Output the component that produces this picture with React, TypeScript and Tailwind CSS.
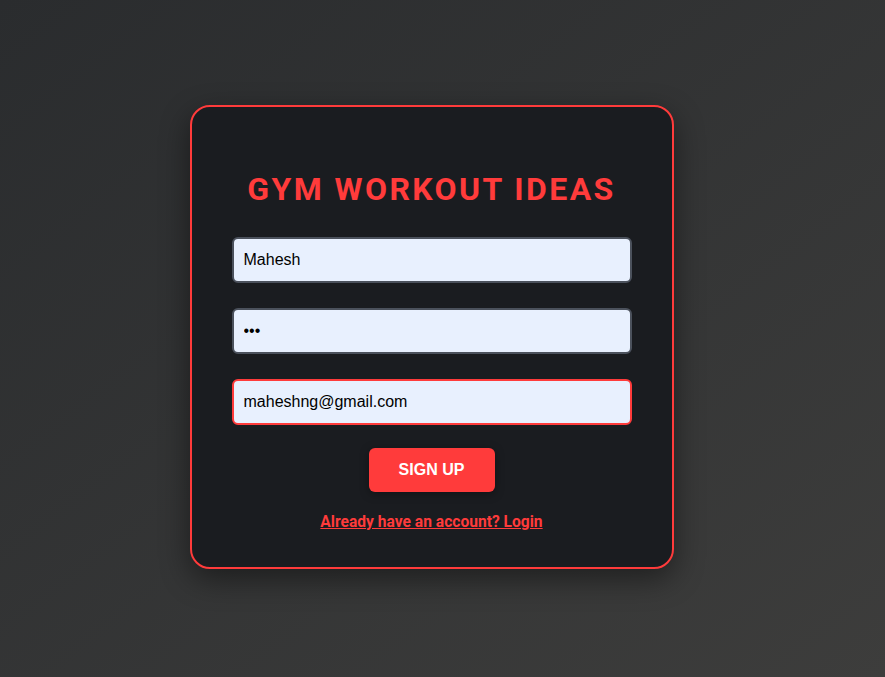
import { useState } from 'react';

export default function App() {
  const [name, setName] = useState('Mahesh');
  const [password, setPassword] = useState('abc');
  const [email, setEmail] = useState('maheshng@gmail.com');

  return (
    <div className="min-h-screen w-full flex items-center justify-center pr-[22px] pb-[4px] bg-gradient-to-br from-[#2a2c2e] to-[#3d3d3c]">
      {/* Signup card */}
      <div className="w-[484px] rounded-[20px] border-2 border-[#ff3b3b] bg-[#1a1c20] px-10 pt-[41px] pb-[35px] shadow-[0_10px_30px_rgba(0,0,0,0.45)] flex flex-col items-center">
        <h1 className="mt-[23px] mb-[29px] text-[32px] leading-[37px] font-bold tracking-[2.4px] text-[#ff3b3b] font-['Roboto',sans-serif]">
          GYM WORKOUT IDEAS
        </h1>

        <form className="w-full flex flex-col items-center" onSubmit={(e) => e.preventDefault()}>
          <input
            type="text"
            value={name}
            onChange={(e) => setName(e.target.value)}
            className="w-full h-[46px] rounded-[6px] border-2 border-[#4b515c] bg-[#e8f0fe] px-[10px] text-[16px] text-black font-['Liberation_Sans',Arial,sans-serif] outline-none"
          />
          <input
            type="password"
            value={password}
            onChange={(e) => setPassword(e.target.value)}
            className="mt-[25px] w-full h-[46px] rounded-[6px] border-2 border-[#4b515c] bg-[#e8f0fe] px-[10px] text-[16px] text-black font-['Liberation_Sans',Arial,sans-serif] outline-none"
          />
          <input
            type="email"
            value={email}
            onChange={(e) => setEmail(e.target.value)}
            className="mt-[25px] w-full h-[46px] rounded-[6px] border-2 border-[#ff3b3b] bg-[#e8f0fe] px-[10px] text-[16px] text-black font-['Liberation_Sans',Arial,sans-serif] outline-none"
          />
          <button
            type="submit"
            className="mt-[23px] w-[126px] h-[44px] rounded-[6px] bg-[#ff3b3b] text-white text-[16px] font-bold font-['Liberation_Sans',Arial,sans-serif] shadow-[0_2px_10px_rgba(0,0,0,0.35)]"
          >
            SIGN UP
          </button>
        </form>

        <a
          href="#"
          className="mt-[21px] text-[15.6px] leading-[19px] font-bold underline text-[#ff3b3b] font-['Roboto',sans-serif]"
        >
          Already have an account? Login
        </a>
      </div>
    </div>
  );
}
